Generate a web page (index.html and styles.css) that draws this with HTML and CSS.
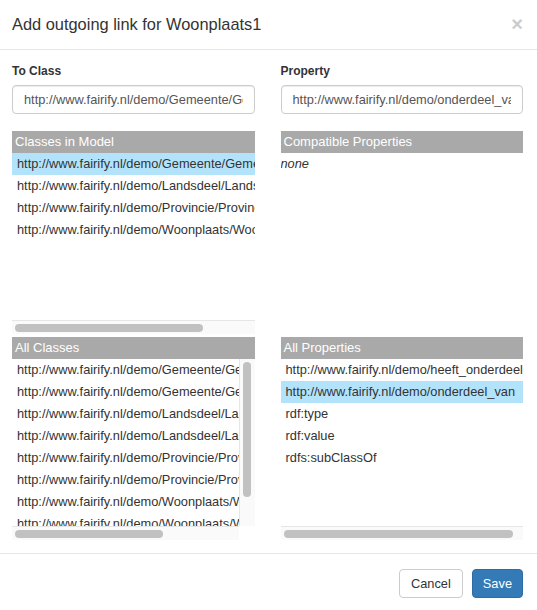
FILE: index.html
```html
<!DOCTYPE html>
<html>
<head>
<meta charset="utf-8">
<link rel="stylesheet" href="styles.css">
</head>
<body>
<div class="modal">
  <div class="modal-header">
    <h4 class="modal-title">Add outgoing link for Woonplaats1</h4>
    <button class="close" type="button">×</button>
  </div>
  <div class="modal-body">
    <div class="column">
      <div class="field">
        <label class="field-label">To Class</label>
        <input class="field-input" type="text" value="http://www.fairify.nl/demo/Gemeente/Gemeente">
      </div>
      <div class="panel panel-top">
        <div class="panel-head">Classes in Model</div>
        <div class="listbox">
          <div class="viewport">
            <div class="row selected">http://www.fairify.nl/demo/Gemeente/Gemeente</div>
            <div class="row">http://www.fairify.nl/demo/Landsdeel/Landsdeel</div>
            <div class="row">http://www.fairify.nl/demo/Provincie/Provincie</div>
            <div class="row">http://www.fairify.nl/demo/Woonplaats/Woonplaats</div>
          </div>
          <div class="hbar hbar-full"><div class="hthumb" style="width:188px"></div></div>
        </div>
      </div>
      <div class="panel panel-bottom">
        <div class="panel-head">All Classes</div>
        <div class="listbox">
          <div class="viewport">
            <div class="row">http://www.fairify.nl/demo/Gemeente/Gemeente</div>
            <div class="row">http://www.fairify.nl/demo/Gemeente/Gemeentegrens</div>
            <div class="row">http://www.fairify.nl/demo/Landsdeel/Landsdeel</div>
            <div class="row">http://www.fairify.nl/demo/Landsdeel/Landsdeelgrens</div>
            <div class="row">http://www.fairify.nl/demo/Provincie/Provincie</div>
            <div class="row">http://www.fairify.nl/demo/Provincie/Provinciegrens</div>
            <div class="row">http://www.fairify.nl/demo/Woonplaats/Woonplaats</div>
            <div class="row">http://www.fairify.nl/demo/Woonplaats/Woonplaatsgrens</div>
            <div class="row">rdfs:Class</div>
          </div>
          <div class="vbar"><div class="vthumb" style="height:135px"></div></div>
          <div class="hbar"><div class="hthumb" style="width:148px"></div></div>
          <div class="corner"></div>
        </div>
      </div>
    </div>
    <div class="column">
      <div class="field">
        <label class="field-label">Property</label>
        <input class="field-input" type="text" value="http://www.fairify.nl/demo/onderdeel_van">
      </div>
      <div class="panel panel-top">
        <div class="panel-head">Compatible Properties</div>
        <div class="listbox">
          <div class="viewport">
            <div class="empty">none</div>
          </div>
        </div>
      </div>
      <div class="panel panel-bottom">
        <div class="panel-head">All Properties</div>
        <div class="listbox">
          <div class="viewport">
            <div class="row">http://www.fairify.nl/demo/heeft_onderdeel</div>
            <div class="row selected">http://www.fairify.nl/demo/onderdeel_van</div>
            <div class="row">rdf:type</div>
            <div class="row">rdf:value</div>
            <div class="row">rdfs:subClassOf</div>
          </div>
          <div class="hbar hbar-full"><div class="hthumb" style="width:229px"></div></div>
        </div>
      </div>
    </div>
  </div>
  <div class="modal-footer">
    <button class="btn btn-default" type="button">Cancel</button>
    <button class="btn btn-primary" type="button">Save</button>
  </div>
</div>
</body>
</html>
```

FILE: styles.css
```css
html, body {
  margin: 0;
  padding: 0;
  background: #fff;
}

body {
  font-family: "Liberation Sans", Arial, Helvetica, sans-serif;
  color: #333;
  font-size: 12.8px;
}

.modal {
  width: 537px;
  height: 610px;
  background: #fff;
  display: flex;
  flex-direction: column;
}

.modal-header {
  display: flex;
  justify-content: space-between;
  align-items: center;
  padding: 14px 14px 15px 12px;
  border-bottom: 1px solid #e5e5e5;
}

.modal-title {
  margin: 0;
  font-size: 16.4px;
  line-height: 20px;
  font-weight: normal;
  color: #333;
}

.close {
  border: 0;
  background: none;
  padding: 0;
  margin: 0;
  font-family: "Liberation Sans", Arial, sans-serif;
  font-size: 20px;
  font-weight: bold;
  line-height: 20px;
  color: #000;
  opacity: 0.2;
}

.modal-body {
  display: grid;
  grid-template-columns: 1fr 1fr;
  column-gap: 26px;
  padding: 13px 14px 13px 12px;
}

.column {
  display: flex;
  flex-direction: column;
  min-width: 0;
}

.field {
  display: flex;
  flex-direction: column;
}

.field-label {
  font-size: 12px;
  font-weight: bold;
  line-height: 17px;
  margin-bottom: 5px;
}

.field-input {
  box-sizing: border-box;
  height: 29px;
  width: 100%;
  margin: 0;
  padding: 0 11px;
  border: 1px solid #ccc;
  border-radius: 4px;
  box-shadow: inset 0 1px 1px rgba(0, 0, 0, 0.075);
  font-family: "Liberation Sans", Arial, sans-serif;
  font-size: 12.8px;
  color: #555;
  background: #fff;
  outline: none;
}

.panel {
  display: flex;
  flex-direction: column;
}

.panel-top {
  margin-top: 17px;
}

.panel-bottom {
  margin-top: 3px;
}

.panel-head {
  height: 22px;
  line-height: 22px;
  background: #a9a9a9;
  color: #fff;
  font-size: 13px;
  padding-left: 3px;
}

.listbox {
  height: 181px;
  display: grid;
  grid-template-columns: minmax(0, 1fr) auto;
  grid-template-rows: minmax(0, 1fr) auto;
}

.viewport {
  grid-column: 1;
  grid-row: 1;
  overflow: hidden;
  min-width: 0;
}

.row {
  height: 22px;
  line-height: 22px;
  padding-left: 5px;
  white-space: nowrap;
  color: #333;
}

.row.selected {
  background: #b3e3fb;
}

.empty {
  font-style: italic;
  line-height: 22px;
}

.hbar {
  grid-column: 1;
  grid-row: 2;
  box-sizing: border-box;
  height: 14px;
  background: #fafafa;
  border-top: 1px solid #e6e6e6;
  padding: 3px 0 0 3px;
}

.hbar-full {
  grid-column: 1 / 3;
}

.hthumb {
  height: 8px;
  border-radius: 4px;
  background: #c1c1c1;
}

.vbar {
  grid-column: 2;
  grid-row: 1;
  box-sizing: border-box;
  width: 16px;
  background: #fafafa;
  border-left: 1px solid #e6e6e6;
  padding: 3px 0 0 3px;
}

.vthumb {
  width: 8px;
  border-radius: 4px;
  background: #c1c1c1;
}

.corner {
  grid-column: 2;
  grid-row: 2;
  background: #fff;
}

.modal-footer {
  border-top: 1px solid #e5e5e5;
  padding: 15px 14px 12px;
  display: flex;
  justify-content: flex-end;
  gap: 9px;
}

.btn {
  box-sizing: border-box;
  height: 29px;
  padding: 0 11px;
  border-radius: 4px;
  font-family: "Liberation Sans", Arial, sans-serif;
  font-size: 12.8px;
  line-height: 27px;
  margin: 0;
}

.btn-default {
  background: #fff;
  border: 1px solid #ccc;
  color: #333;
}

.btn-primary {
  background: #337ab7;
  border: 1px solid #2e6da4;
  color: #fff;
  padding: 0 10px;
}
```
